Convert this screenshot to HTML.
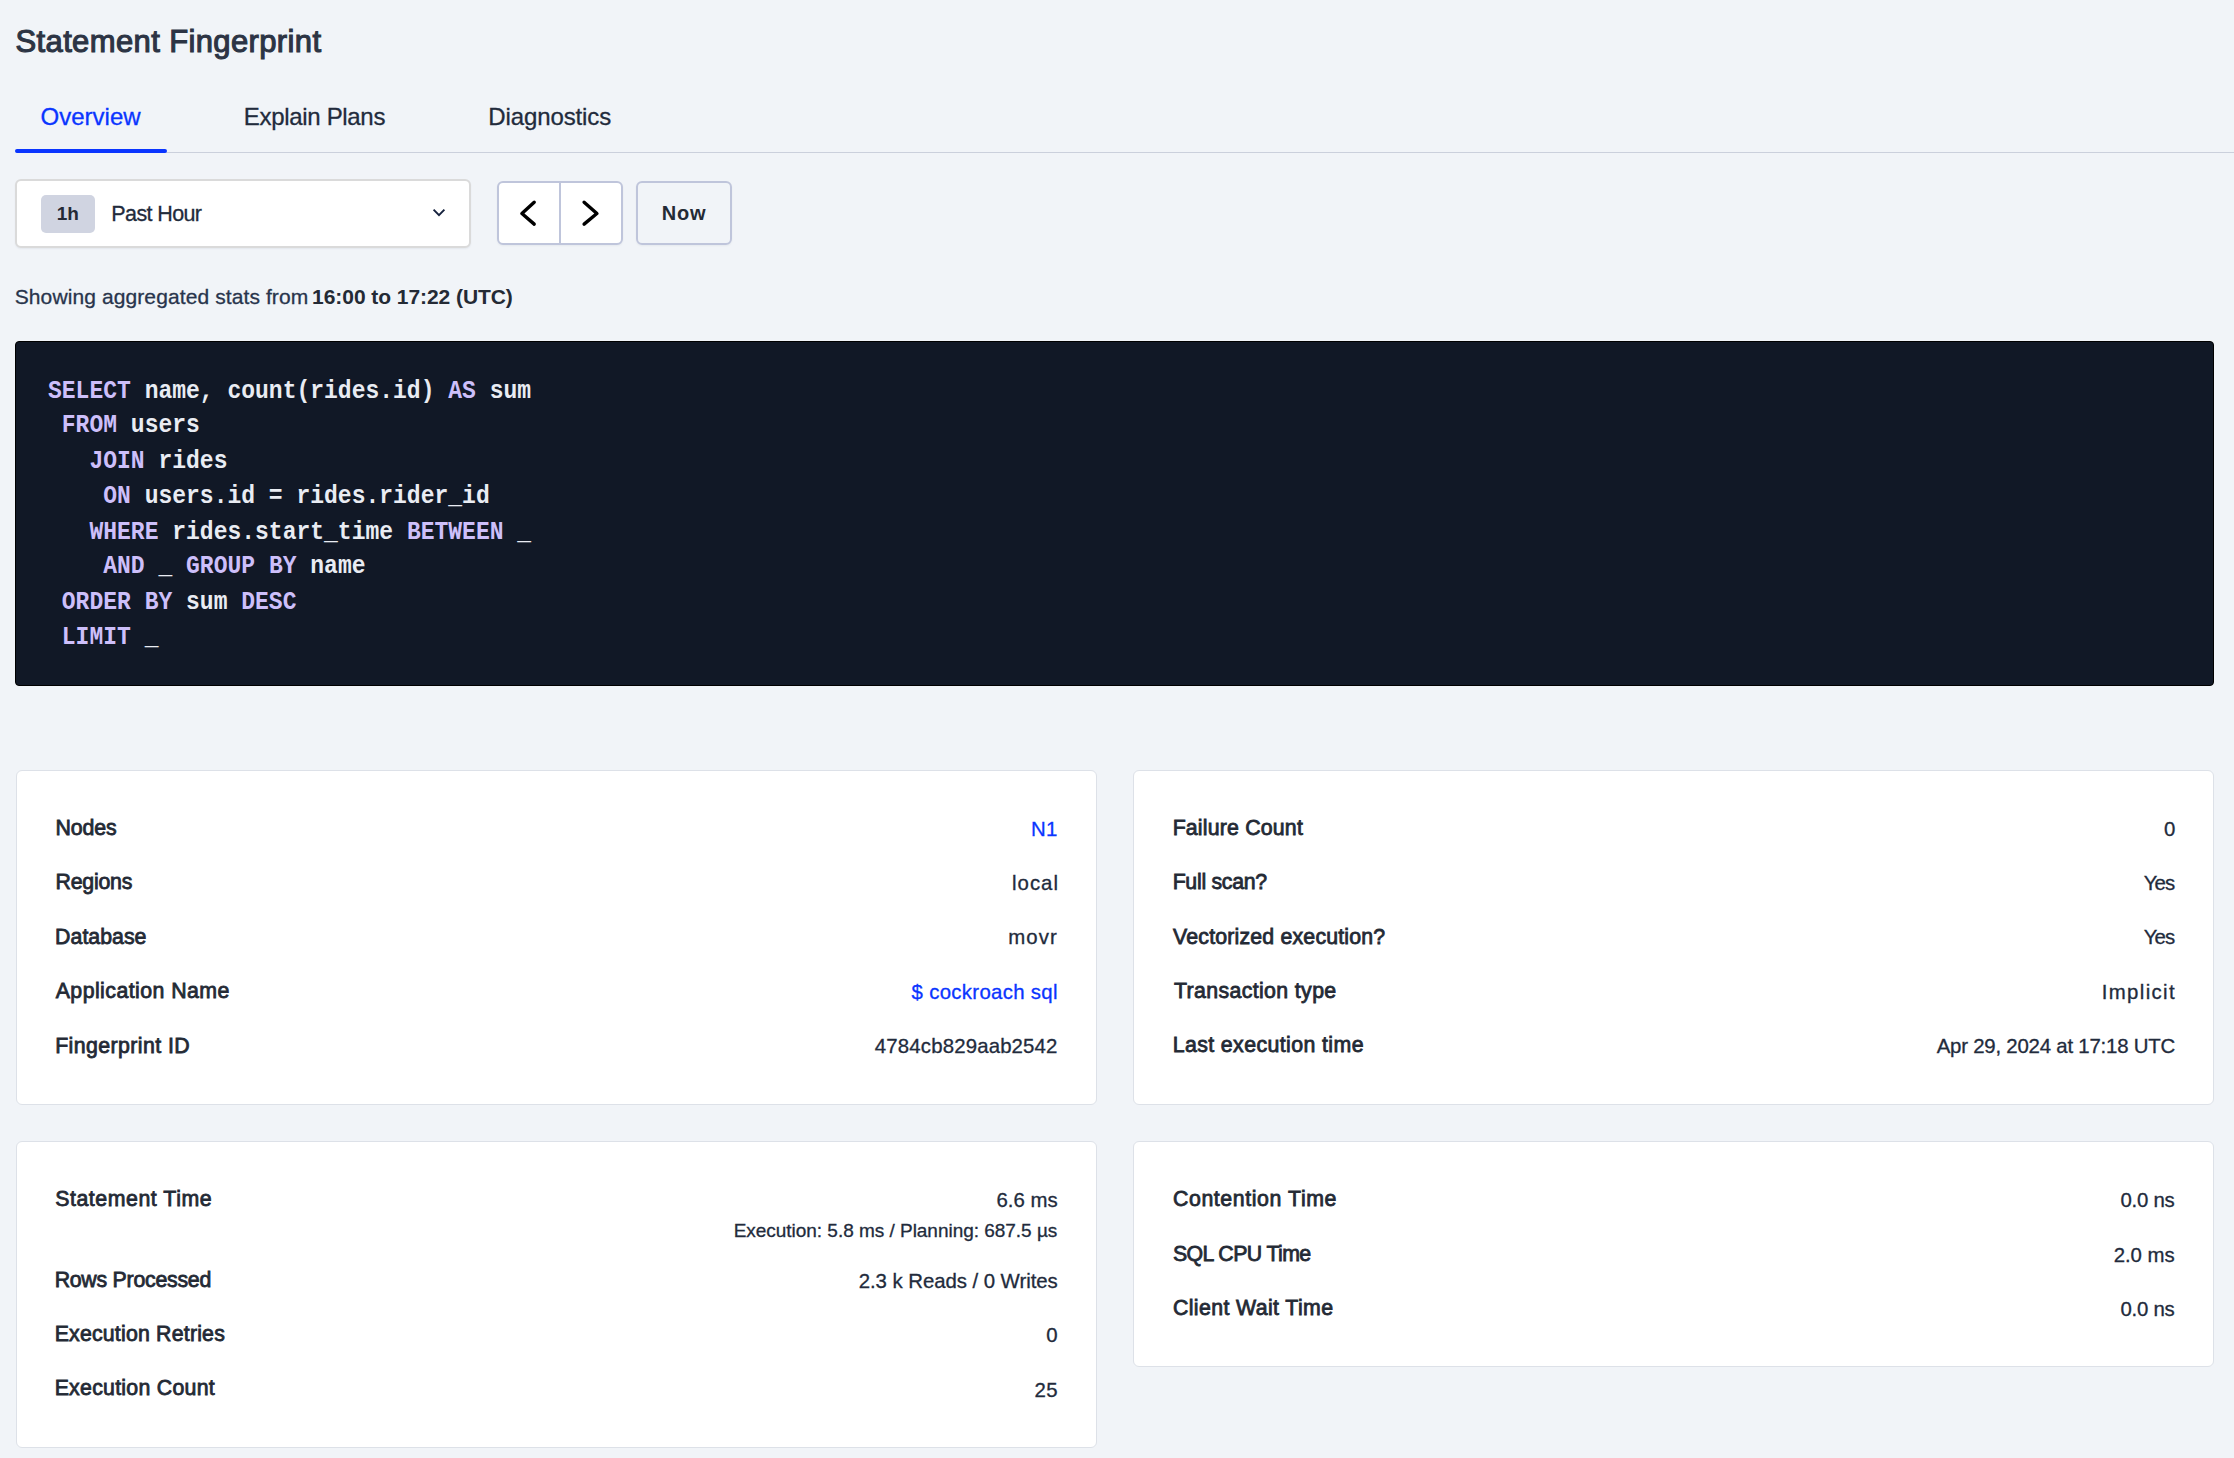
<!DOCTYPE html>
<html><head><meta charset="utf-8">
<style>

html,body{margin:0;padding:0;background:#f1f4f8;}
body{width:2234px;height:1458px;background:#f1f4f8;position:relative;overflow:hidden;font-family:"Liberation Sans",sans-serif;color:#242a35;}
.a{position:absolute;white-space:pre;line-height:1;}
.title{font-size:31px;color:#2c3444;-webkit-text-stroke:1.1px #2c3444;}
.tab{font-size:24px;color:#222b3c;-webkit-text-stroke:0.3px #222b3c;}
.tab.on{color:#0a35ff;-webkit-text-stroke:0.3px #0a35ff;}
.badgetxt{font-size:19px;font-weight:700;color:#242a35;}
.past{font-size:21.5px;color:#222b3c;-webkit-text-stroke:0.3px #222b3c;}
.nowtxt{font-size:20px;font-weight:700;color:#242a35;}
.show{font-size:21px;color:#28344c;-webkit-text-stroke:0.3px #28344c;}
.showb{font-size:21px;font-weight:700;color:#242a35;}
.lab{font-size:21.3px;color:#242a35;-webkit-text-stroke:0.8px #242a35;}
.val{font-size:20.4px;color:#222b3c;-webkit-text-stroke:0.3px #222b3c;}
.link{color:#0a35ff;-webkit-text-stroke:0.3px #0a35ff;}
.sub{font-size:19px;color:#222b3c;-webkit-text-stroke:0.3px #222b3c;}
.box{position:absolute;box-sizing:border-box;}
.mono{position:absolute;white-space:pre;font-family:"Liberation Mono",monospace;font-weight:700;font-size:23px;letter-spacing:0.0px;color:#e9ecf3;line-height:31.43px;transform:scaleY(1.12);transform-origin:0 0;}
.kw{color:#cdbffa;}
.card{background:#fff;border:1px solid #dde1e8;border-radius:6px;}

</style></head><body>

<div class="box" style="left:16px;top:152px;width:2218px;height:1px;background:#cbd0dc;"></div>
<div class="box" style="left:15px;top:149px;width:152px;height:4px;border-radius:2px;background:#0a35ff;"></div>
<div class="box" style="left:15px;top:179px;width:456px;height:69px;background:#fff;border:2px solid #dadada;border-radius:6px;box-shadow:0 1px 2px rgba(20,30,60,0.06);"></div>
<div class="box" style="left:41px;top:195px;width:54px;height:38px;background:#d0d4e1;border-radius:5px;"></div>
<svg class="box" style="left:430px;top:204px" width="18" height="16" viewBox="0 0 18 16"><path d="M3.6 5.6 L9 11.2 L14.4 5.6" fill="none" stroke="#15213d" stroke-width="1.9"/></svg>
<div class="box" style="left:497px;top:181px;width:126px;height:64px;background:#fff;border:2px solid #bfc5db;border-radius:6px;box-shadow:0 1px 2px rgba(20,30,60,0.05);"></div>
<div class="box" style="left:559px;top:181px;width:2px;height:64px;background:#bfc5db;"></div>
<svg class="box" style="left:512px;top:195px" width="32" height="36" viewBox="0 0 32 36"><path d="M22.2 7.2 L9.9 18.5 L22.2 29.1" fill="none" stroke="#000" stroke-width="3.4" stroke-linecap="round" stroke-linejoin="round"/></svg>
<svg class="box" style="left:574px;top:195px" width="32" height="36" viewBox="0 0 32 36"><path d="M10.1 7.2 L22.9 18.5 L10.1 29.1" fill="none" stroke="#000" stroke-width="3.4" stroke-linecap="round" stroke-linejoin="round"/></svg>
<div class="box" style="left:636px;top:181px;width:96px;height:64px;border:2px solid #bfc5db;border-radius:6px;box-shadow:0 1px 2px rgba(20,30,60,0.05);"></div>
<div class="box" style="left:15px;top:341px;width:2199px;height:345px;background:#111826;border:1px solid #000;border-radius:4px;"></div>
<div class="box card" style="left:16px;top:770px;width:1081px;height:335px;"></div>
<div class="box card" style="left:1133px;top:770px;width:1081px;height:335px;"></div>
<div class="box card" style="left:16px;top:1141px;width:1081px;height:307px;"></div>
<div class="box card" style="left:1133px;top:1141px;width:1081px;height:226px;"></div>

<div id="title" class="a title" style="left:15.49px;top:26.32px;letter-spacing:0.374px">Statement Fingerprint</div>
<div id="t1" class="a tab on" style="left:40.50px;top:105.22px;letter-spacing:0.006px">Overview</div>
<div id="t2" class="a tab" style="left:243.80px;top:105.01px;letter-spacing:-0.319px">Explain Plans</div>
<div id="t3" class="a tab" style="left:488.16px;top:105.10px;letter-spacing:-0.095px">Diagnostics</div>
<div id="b1h" class="a badgetxt" style="left:56.87px;top:204.41px;letter-spacing:-0.182px">1h</div>
<div id="past" class="a past" style="left:111.36px;top:203.51px;letter-spacing:-0.625px">Past Hour</div>
<div id="now" class="a nowtxt" style="left:661.82px;top:202.81px;letter-spacing:0.733px">Now</div>
<div id="show1" class="a show" style="left:14.73px;top:285.70px;letter-spacing:0.102px">Showing aggregated stats from</div>
<div id="show2" class="a showb" style="left:312.11px;top:285.70px;letter-spacing:-0.060px">16:00 to 17:22 (UTC)</div>
<div id="l11" class="a lab" style="left:55.44px;top:818.00px;letter-spacing:-0.097px">Nodes</div>
<div id="l12" class="a lab" style="left:55.44px;top:872.20px;letter-spacing:-0.192px">Regions</div>
<div id="l13" class="a lab" style="left:55.11px;top:926.70px;letter-spacing:0.022px">Database</div>
<div id="l14" class="a lab" style="left:55.70px;top:981.20px;letter-spacing:0.449px">Application Name</div>
<div id="l15" class="a lab" style="left:55.14px;top:1035.50px;letter-spacing:0.430px">Fingerprint ID</div>
<div id="v11" class="a val link" style="left:1030.97px;top:818.81px;letter-spacing:0.281px">N1</div>
<div id="v12" class="a val" style="left:1012.08px;top:872.70px;letter-spacing:0.988px">local</div>
<div id="v13" class="a val" style="left:1008.20px;top:927.31px;letter-spacing:1.135px">movr</div>
<div id="v14" class="a val link" style="left:911.58px;top:982.20px;letter-spacing:0.304px">$ cockroach sql</div>
<div id="v15" class="a val" style="left:874.86px;top:1036.41px;letter-spacing:0.152px">4784cb829aab2542</div>
<div id="l21" class="a lab" style="left:1172.64px;top:817.81px;letter-spacing:0.197px">Failure Count</div>
<div id="l22" class="a lab" style="left:1172.64px;top:872.31px;letter-spacing:-0.275px">Full scan?</div>
<div id="l23" class="a lab" style="left:1173.06px;top:926.50px;letter-spacing:0.188px">Vectorized execution?</div>
<div id="l24" class="a lab" style="left:1173.89px;top:980.81px;letter-spacing:0.378px">Transaction type</div>
<div id="l25" class="a lab" style="left:1172.64px;top:1035.20px;letter-spacing:0.411px">Last execution time</div>
<div id="v21" class="a val" style="left:2163.91px;top:818.50px;letter-spacing:0.000px">0</div>
<div id="v22" class="a val" style="left:2143.66px;top:872.70px;letter-spacing:-0.810px">Yes</div>
<div id="v23" class="a val" style="left:2143.66px;top:927.00px;letter-spacing:-0.810px">Yes</div>
<div id="v24" class="a val" style="left:2101.66px;top:981.50px;letter-spacing:1.365px">Implicit</div>
<div id="v25" class="a val" style="left:1936.66px;top:1036.00px;letter-spacing:-0.216px">Apr 29, 2024 at 17:18 UTC</div>
<div id="l31" class="a lab" style="left:55.20px;top:1188.91px;letter-spacing:0.556px">Statement Time</div>
<div id="l32" class="a lab" style="left:54.64px;top:1269.91px;letter-spacing:-0.243px">Rows Processed</div>
<div id="l33" class="a lab" style="left:54.64px;top:1323.91px;letter-spacing:0.205px">Execution Retries</div>
<div id="l34" class="a lab" style="left:54.64px;top:1378.31px;letter-spacing:0.271px">Execution Count</div>
<div id="v31" class="a val" style="left:996.42px;top:1190.00px;letter-spacing:0.036px">6.6 ms</div>
<div id="v31s" class="a sub" style="left:733.64px;top:1221.31px;letter-spacing:-0.025px">Execution: 5.8 ms / Planning: 687.5 µs</div>
<div id="v32" class="a val" style="left:858.67px;top:1270.70px;letter-spacing:-0.054px">2.3 k Reads / 0 Writes</div>
<div id="v33" class="a val" style="left:1046.24px;top:1325.41px;letter-spacing:0.000px">0</div>
<div id="v34" class="a val" style="left:1034.48px;top:1379.81px;letter-spacing:0.490px">25</div>
<div id="l41" class="a lab" style="left:1172.97px;top:1189.00px;letter-spacing:0.600px">Contention Time</div>
<div id="l42" class="a lab" style="left:1173.00px;top:1243.50px;letter-spacing:-0.599px">SQL CPU Time</div>
<div id="l43" class="a lab" style="left:1172.97px;top:1298.00px;letter-spacing:0.388px">Client Wait Time</div>
<div id="v41" class="a val" style="left:2120.39px;top:1190.41px;letter-spacing:-0.240px">0.0 ns</div>
<div id="v42" class="a val" style="left:2113.67px;top:1244.70px;letter-spacing:-0.027px">2.0 ms</div>
<div id="v43" class="a val" style="left:2120.39px;top:1298.91px;letter-spacing:-0.240px">0.0 ns</div>
<div class="mono" style="left:48px;top:374px"><span class="kw">SELECT</span> name, count(rides.id) <span class="kw">AS</span> sum
 <span class="kw">FROM</span> users
   <span class="kw">JOIN</span> rides
    <span class="kw">ON</span> users.id = rides.rider_id
   <span class="kw">WHERE</span> rides.start_time <span class="kw">BETWEEN</span> _
    <span class="kw">AND</span> _ <span class="kw">GROUP</span> <span class="kw">BY</span> name
 <span class="kw">ORDER</span> <span class="kw">BY</span> sum <span class="kw">DESC</span>
 <span class="kw">LIMIT</span> _</div>
</body></html>
